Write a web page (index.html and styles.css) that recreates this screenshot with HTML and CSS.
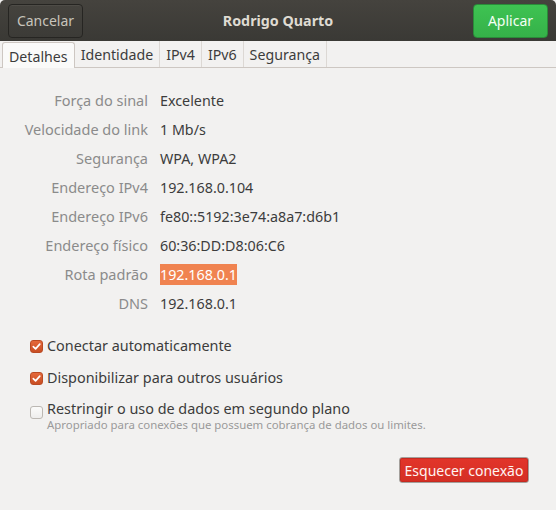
FILE: index.html
```html
<!DOCTYPE html>
<html>
<head>
<meta charset="utf-8">
<link rel="stylesheet" href="styles.css">
</head>
<body>
<div class="win">
  <header class="hdr">
    <button class="hbtn cancel">Cancelar</button>
    <div class="title">Rodrigo Quarto</div>
    <button class="hbtn apply">Aplicar</button>
  </header>
  <nav class="tabs">
    <div class="tab active">Detalhes</div>
    <div class="tab">Identidade</div>
    <div class="tab">IPv4</div>
    <div class="tab">IPv6</div>
    <div class="tab">Segurança</div>
  </nav>
  <main class="content">
    <div class="grid">
      <div class="lbl">Força do sinal</div><div class="val">Excelente</div>
      <div class="lbl">Velocidade do link</div><div class="val">1 Mb/s</div>
      <div class="lbl">Segurança</div><div class="val">WPA, WPA2</div>
      <div class="lbl">Endereço IPv4</div><div class="val">192.168.0.104</div>
      <div class="lbl">Endereço IPv6</div><div class="val">fe80::5192:3e74:a8a7:d6b1</div>
      <div class="lbl">Endereço físico</div><div class="val">60:36:DD:D8:06:C6</div>
      <div class="lbl">Rota padrão</div><div class="val"><span class="sel">192.168.0.1</span></div>
      <div class="lbl">DNS</div><div class="val">192.168.0.1</div>
    </div>
    <div class="checks">
      <div class="chk"><span class="box on"><svg viewBox="0 0 12 12" width="12" height="12"><path d="M2.5 6.2 L5 8.6 L9.6 3.4" fill="none" stroke="#fff" stroke-width="1.8" stroke-linecap="round" stroke-linejoin="round"/></svg></span><span class="ctext">Conectar automaticamente</span></div>
      <div class="chk"><span class="box on"><svg viewBox="0 0 12 12" width="12" height="12"><path d="M2.5 6.2 L5 8.6 L9.6 3.4" fill="none" stroke="#fff" stroke-width="1.8" stroke-linecap="round" stroke-linejoin="round"/></svg></span><span class="ctext">Disponibilizar para outros usuários</span></div>
      <div class="chk top"><span class="box"></span><div class="cwrap"><span class="ctext">Restringir o uso de dados em segundo plano</span><span class="sub">Apropriado para conexões que possuem cobrança de dados ou limites.</span></div></div>
    </div>
    <div class="actions">
      <button class="forget">Esquecer conexão</button>
    </div>
  </main>
</div>
</body>
</html>
```
FILE: styles.css
```css
* { box-sizing: border-box; }
html, body { margin: 0; padding: 0; }
body {
  width: 556px; height: 510px; overflow: hidden;
  background: #f2f1f0;
  font-family: "Noto Sans", "DejaVu Sans", sans-serif;
  font-size: 14.3px;
  color: #3c3c3c;
}
.win { width: 556px; height: 510px; display: flex; flex-direction: column; }
.hdr {
  height: 41px;
  background: linear-gradient(#45433e, #3a3935);
  display: flex; align-items: center; justify-content: space-between;
  padding: 0 8px;
  border-radius: 5px 5px 0 0;
}
.hbtn {
  height: 34px; width: 75px;
  border-radius: 4px;
  font-family: inherit; font-size: 14px;
  padding: 0;
}
.cancel {
  background: linear-gradient(#45433e, #3c3b37);
  border: 1px solid #262522;
  color: #c8c4bb;
  box-shadow: inset 0 1px rgba(255,255,255,0.05);
}
.apply {
  background: linear-gradient(#3ec352, #35b149);
  border: 1px solid #2a8c39;
  color: #f4fff4;
}
.title { color: #dfdbd2; font-weight: bold; font-size: 14.3px; }
.tabs {
  height: 27px;
  display: flex; align-items: stretch;
  padding-left: 2px;
  border-bottom: 1px solid #cdc7c2;
  background: #f2f1f0;
}
.tab {
  padding: 0 6px;
  display: flex; align-items: center;
  border-right: 1px solid #dcd8d4;
  color: #3c3c3c;
  font-size: 14.2px;
  padding-top: 1px;
}
.tab.active {
  background: #fafaf9;
  border: 1px solid #cdc7c2;
  border-bottom: none;
  border-radius: 3px 3px 0 0;
  margin-top: 1px;
  margin-bottom: -1px;
}
.content { flex: 1; display: flex; flex-direction: column; padding-top: 20px; }
.grid {
  display: grid;
  grid-template-columns: 148px 1fr;
  column-gap: 12px;
  row-gap: 0;
}
.lbl { text-align: right; color: #8b8b8b; height: 29px; line-height: 25px; font-size: 14.5px; }
.val { height: 29px; line-height: 25px; color: #3c3c3c; }
.sel { background: #f08350; color: #fff; padding: 1px 0; }
.checks { padding-left: 30px; margin-top: 16px; display: flex; flex-direction: column; gap: 12px; }
.chk { display: flex; align-items: center; gap: 4px; font-size: 14.4px; height: 20px; }
.chk.top { align-items: flex-start; height: auto; }
.box {
  width: 13px; height: 13px; border-radius: 3px;
  border: 1px solid #bcb8b3;
  background: linear-gradient(#fbfbfa, #eeedec);
  display: flex; align-items: center; justify-content: center;
  flex: none;
}
.chk.top .box { margin-top: 6px; }
.box.on { background: linear-gradient(#e4683a, #c94e23); border-color: #b94a23; }
.box svg { width: 11px; height: 11px; }
.cwrap { display: flex; flex-direction: column; }
.ctext { line-height: 20px; }
.chk.top .ctext { line-height: 18px; }
.sub { font-size: 11.4px; color: #9a9a9a; line-height: 13px; }
.actions { display: flex; justify-content: flex-end; padding-right: 27px; margin-top: 26px; }
.forget {
  height: 26px; width: 130px;
  background: linear-gradient(#e2352a, #d42e24);
  border: 1px solid #a4a09c;
  box-shadow: inset 0 0 0 1px #c62a21;
  border-radius: 3px;
  color: #fff4f2;
  font-family: inherit; font-size: 14px;
  padding: 0;
}
```
